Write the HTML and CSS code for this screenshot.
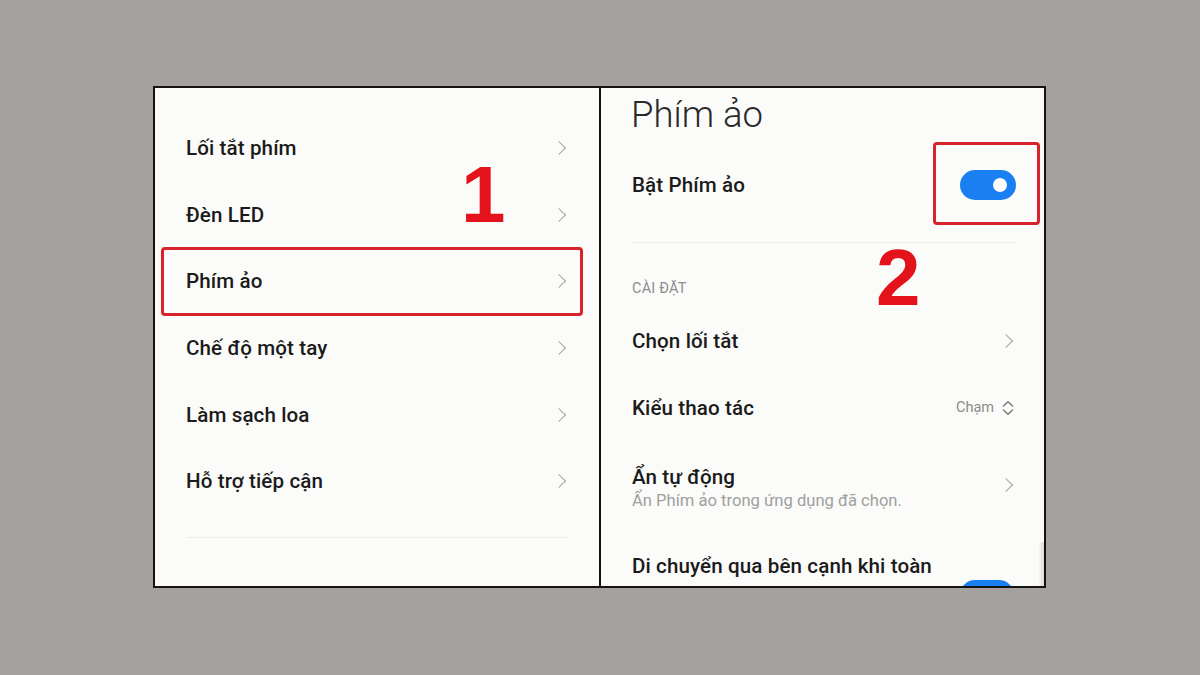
FILE: index.html
```html
<!DOCTYPE html>
<html lang="vi">
<head>
<meta charset="utf-8">
<title>Phím ảo</title>
<link rel="stylesheet" href="styles.css">
</head>
<body>
<div class="frame">
  <section class="panel left">
    <div class="row"><span class="label">Lối tắt phím</span><span class="chev"></span></div>
    <div class="row"><span class="label">Đèn LED</span><span class="chev"></span></div>
    <div class="row highlighted"><span class="label">Phím ảo</span><span class="chev"></span></div>
    <div class="row"><span class="label">Chế độ một tay</span><span class="chev"></span></div>
    <div class="row"><span class="label">Làm sạch loa</span><span class="chev"></span></div>
    <div class="row"><span class="label">Hỗ trợ tiếp cận</span><span class="chev"></span></div>
    <div class="sep left-sep"></div>
    <div class="step step-1">1</div>
  </section>
  <div class="divider"></div>
  <section class="panel right">
    <h1 class="title">Phím ảo</h1>
    <div class="row toggle-row">
      <span class="label">Bật Phím ảo</span>
      <span class="toggle-wrap"><span class="toggle"><span class="knob"></span></span></span>
    </div>
    <div class="sep right-sep"></div>
    <div class="section-label">CÀI ĐẶT</div>
    <div class="row"><span class="label">Chọn lối tắt</span><span class="chev"></span></div>
    <div class="row"><span class="label">Kiểu thao tác</span>
      <span class="value">Chạm
        <svg class="updown" width="12" height="16" viewBox="0 0 12 16"><path d="M1.5 6 L6 1.8 L10.5 6 M1.5 10 L6 14.2 L10.5 10" fill="none" stroke="#777" stroke-width="1.4" stroke-linecap="round" stroke-linejoin="round"/></svg>
      </span>
    </div>
    <div class="row tall"><span class="stack"><span class="label">Ẩn tự động</span><span class="sub">Ẩn Phím ảo trong ứng dụng đã chọn.</span></span><span class="chev"></span></div>
    <div class="row cut"><span class="label wrap">Di chuyển qua bên cạnh khi toàn màn hình</span><span class="toggle small"></span></div>
    <div class="scroll-hint"></div>
    <div class="step step-2">2</div>
  </section>
</div>
</body>
</html>
```
FILE: styles.css
```css
html, body {
  margin: 0;
  padding: 0;
}
body {
  width: 1200px;
  height: 675px;
  background: #a4a19f;
  font-family: Roboto, "Noto Sans", sans-serif;
  overflow: hidden;
}
.frame {
  margin: 86px 0 0 153px;
  width: 889px;
  height: 498px;
  border: 2px solid #141414;
  display: flex;
  background: #fbfbf9;
}
.panel {
  position: relative;
  height: 100%;
  overflow: hidden;
  background: #fbfbf9;
}
.left {
  width: 444px;
  padding-top: 27px;
  box-sizing: border-box;
}
.divider {
  width: 2px;
  background: #141414;
}
.right {
  flex: 1;
}
.row {
  position: relative;
  height: 66.6px;
  display: flex;
  align-items: center;
  justify-content: space-between;
  padding: 0 32px 0 31px;
}
.label {
  font-size: 20.6px;
  font-weight: 500;
  color: #1b1b1b;
  letter-spacing: 0.1px;
}
.chev {
  width: 9px;
  height: 9px;
  border-top: 1.5px solid #a6a6a6;
  border-right: 1.5px solid #a6a6a6;
  transform: rotate(45deg);
  margin-right: 3px;
}
.highlighted::after {
  content: "";
  position: absolute;
  left: 6px;
  right: 16px;
  top: -1px;
  bottom: -1px;
  border: 3px solid #d8232a;
  border-radius: 4px;
}
.sep {
  height: 1px;
  background: #ececea;
}
.left-sep {
  margin: 22px 32px 0 31px;
}
.step {
  position: absolute;
  font-family: "Liberation Sans", Arial, sans-serif;
  font-weight: 700;
  font-size: 80px;
  line-height: 80px;
  color: #e4121b;
}
.step-1 {
  left: 306px;
  top: 67px;
}
.step-2 {
  left: 275px;
  top: 150px;
}
.title {
  margin: 0;
  padding: 7px 0 17px 30px;
  font-size: 36.5px;
  line-height: 40px;
  font-weight: 300;
  color: #2a2a2a;
}
.toggle-row {
  height: 66px;
}
.right .row.toggle-row {
  padding-right: 28px;
}
.toggle-wrap {
  position: relative;
  display: flex;
}
.toggle-wrap::after {
  content: "";
  position: absolute;
  left: -27px;
  right: -24px;
  top: -28px;
  bottom: -25px;
  border: 3px solid #d8232a;
  border-radius: 4px;
}
.toggle {
  position: relative;
  width: 56px;
  height: 30px;
  border-radius: 15px;
  background: #1a7ff0;
  display: block;
}
.knob {
  position: absolute;
  right: 9px;
  top: 8px;
  width: 14px;
  height: 14px;
  border-radius: 50%;
  background: #fff;
}
.right-sep {
  margin: 24px 28px 0 31px;
}
.section-label {
  height: 65px;
  padding: 37px 0 0 31px;
  box-sizing: border-box;
  font-size: 14.5px;
  color: #8e8e8e;
  letter-spacing: 0.2px;
}
.right .row {
  padding-right: 30px;
}
.value {
  display: flex;
  align-items: center;
  gap: 8px;
  font-size: 14.5px;
  color: #8a8a8a;
}
.updown {
  display: block;
}
.row.tall {
  height: 88px;
}
.stack {
  display: flex;
  flex-direction: column;
  gap: 2px;
  margin-top: 5px;
}
.sub {
  font-size: 16.6px;
  color: #a0a0a0;
}
.row.cut {
  align-items: flex-start;
  height: 90px;
  padding-top: 23px;
  box-sizing: border-box;
}
.label.wrap {
  width: 330px;
  line-height: 28px;
}
.toggle.small {
  margin-top: 28px;
  width: 54px;
  margin-right: 0;
}
.scroll-hint {
  position: absolute;
  right: 0;
  bottom: 0;
  width: 6px;
  height: 44px;
  background: linear-gradient(90deg, #fbfbf9, #dcdcda);
  border-radius: 4px 0 0 0;
}
```
